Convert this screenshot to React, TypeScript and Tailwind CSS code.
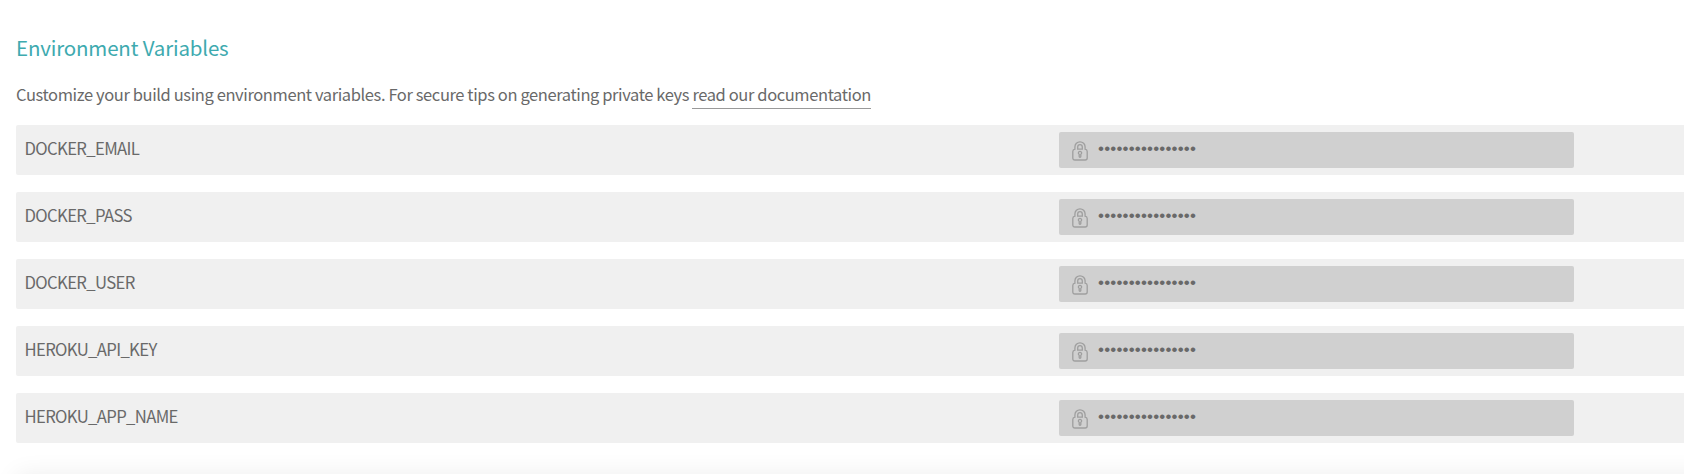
const variables = ['DOCKER_EMAIL', 'DOCKER_PASS', 'DOCKER_USER', 'HEROKU_API_KEY', 'HEROKU_APP_NAME'];

function LockIcon() {
  return (
    <svg className="mt-[2px] h-5 w-4 shrink-0" viewBox="0 0 16 20" fill="none" stroke="#9e9e9e" strokeWidth="1.3">
      <path d="M2.9 8.2V5.9a5.1 5.1 0 0 1 10.2 0v2.3c1.3.3 2.1 1 2.1 2.3v6.4c0 1.3-.8 2.1-2.1 2.1H2.9c-1.3 0-2.1-.8-2.1-2.1v-6.4c0-1.3.8-2 2.1-2.3z" />
      <path d="M5.7 8.1V5.9a2.3 2.3 0 0 1 4.6 0v2.2z" />
      <path d="M8 10.3a1.6 1.6 0 0 0-.8 3v2.2a.8.8 0 0 0 1.6 0v-2.2a1.6 1.6 0 0 0-.8-3z" />
    </svg>
  );
}

function VariableRow({ name }: { name: string }) {
  return (
    <li className="flex h-[50px] items-center rounded-l-[2px] bg-[#f0f0f0] pl-2">
      <span className="w-[1035px] shrink-0 pb-1 pl-[0.5px] text-[16.7px] leading-6 tracking-[-0.65px]">{name}</span>
      <div className="flex h-9 w-[515px] items-center rounded-[2px] bg-[#d0d0d0] pl-[13px]">
        <LockIcon />
        <span className="ml-[10px] pb-[2px] font-['Liberation_Sans',sans-serif] text-[17px] leading-6 tracking-[0.18px]">
          ••••••••••••••••
        </span>
      </div>
    </li>
  );
}

export default function App() {
  return (
    <main className="flex h-[474px] flex-col overflow-hidden bg-white font-['Noto_Sans_CJK_SC',sans-serif] text-[#696969]">
      <section className="pl-4">
        <h2 className="pt-8 text-[20.5px] leading-[30px] tracking-[-0.17px] text-[#3eaaaf]">Environment Variables</h2>
        <p className="mt-[20px] h-[26px] text-[16.5px] leading-6 tracking-[-0.395px]">
          Customize your build using environment variables. For secure tips on generating private keys{' '}
          <a href="#documentation" className="inline-block border-b border-[#999999] pb-[2px]">
            read our documentation
          </a>
        </p>
        <ul className="mt-[17px] flex flex-col gap-[17px]">
          {variables.map((name) => (
            <VariableRow key={name} name={name} />
          ))}
        </ul>
      </section>
      <div className="-mr-8 mt-[31px] ml-4 h-[60px] shrink-0 bg-white shadow-[0_0_24px_rgba(0,0,0,0.07)]" />
    </main>
  );
}
